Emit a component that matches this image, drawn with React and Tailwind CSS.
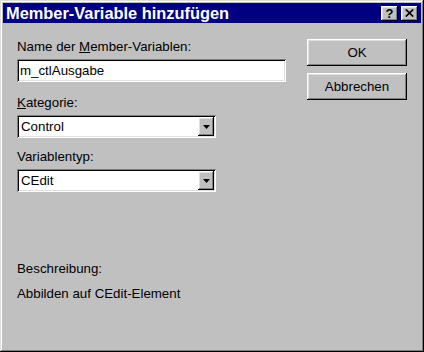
import React from 'react';

const raised =
  'shadow-[inset_-1px_-1px_0_#000,inset_1px_1px_0_#fff,inset_-2px_-2px_0_#808080,inset_2px_2px_0_#dfdfdf]';
const sunken =
  'shadow-[inset_1px_1px_0_#808080,inset_-1px_-1px_0_#fff,inset_2px_2px_0_#000,inset_-2px_-2px_0_#dfdfdf]';

const Combo = ({ value }) => (
  <div className={`mt-[4px] flex h-[23px] w-[199px] items-center bg-white p-[2px] ${sunken}`}>
    <div className="flex-1 pl-[2px] text-black">{value}</div>
    <div className={`flex h-[19px] w-[16px] items-center justify-center bg-[#c0c0c0] ${raised}`}>
      <svg width="7" height="4" viewBox="0 0 7 4">
        <path d="M0 0h7L3.5 4z" fill="#000" />
      </svg>
    </div>
  </div>
);

const Button = ({ children }) => (
  <button className={`flex h-[27px] w-[100px] items-center justify-center bg-[#c0c0c0] text-black ${raised}`}>
    {children}
  </button>
);

export default function App() {
  return (
    <div
      className={`flex h-[352px] w-[424px] flex-col bg-[#c0c0c0] p-[3px] font-['Liberation_Sans',Arial,sans-serif] text-[13.3px] leading-[16px] text-black shadow-[inset_-1px_-1px_0_#000,inset_1px_1px_0_#dfdfdf,inset_-2px_-2px_0_#808080,inset_2px_2px_0_#fff]`}
    >
      {/* title bar */}
      <div className="flex h-[20px] items-center bg-[#000080] pl-[3px] pr-[3px]">
        <span className="flex-1 text-[16.4px] font-bold leading-[20px] text-white">Member-Variable hinzufügen</span>
        <div className={`flex h-[15px] w-[17px] items-center justify-center bg-[#c0c0c0] ${raised}`}>
          <span className="text-[13px] font-bold leading-[13px] text-black">?</span>
        </div>
        <div className={`ml-[3px] flex h-[15px] w-[17px] items-center justify-center bg-[#c0c0c0] ${raised}`}>
          <svg width="9" height="8" viewBox="0 0 9 8">
            <path d="M0.8 0.5L8.2 7.5M8.2 0.5L0.8 7.5" stroke="#000" strokeWidth="1.7" />
          </svg>
        </div>
      </div>

      {/* body */}
      <div className="flex flex-1 pl-[14px] pt-[16px]">
        <div className="flex w-[269px] flex-col">
          <div>
            Name der <span className="underline">M</span>ember-Variablen:
          </div>
          <div className={`mt-[4px] flex h-[23px] items-center bg-white p-[2px] pl-[3px] ${sunken}`}>
            m_ctlAusgabe
          </div>

          <div className="mt-[13px]">
            <span className="underline">K</span>ategorie:
          </div>
          <Combo value="Control" />

          <div className="mt-[11px]">Variablentyp:</div>
          <Combo value="CEdit" />

          <div className="mt-[69px]">Beschreibung:</div>
          <div className="mt-[9px]">Abbilden auf CEdit-Element</div>
        </div>

        <div className="ml-[21px] flex flex-col gap-[7px]">
          <Button>OK</Button>
          <Button>Abbrechen</Button>
        </div>
      </div>
    </div>
  );
}
